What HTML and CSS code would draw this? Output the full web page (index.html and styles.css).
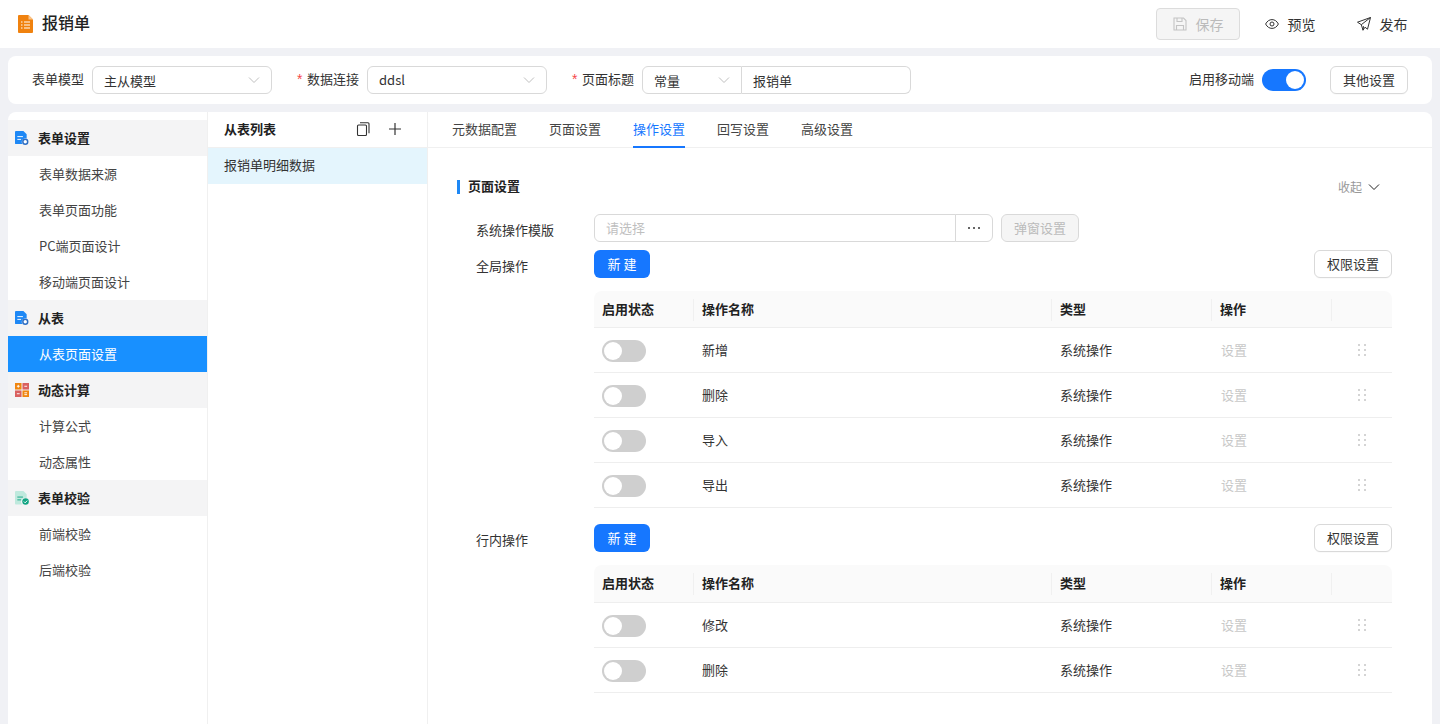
FILE: index.html
```html
<!DOCTYPE html>
<html lang="zh-CN">
<head>
<meta charset="utf-8">
<title>报销单</title>
<link rel="stylesheet" href="styles.css">
</head>
<body>
<svg class="defs" width="0" height="0" aria-hidden="true">
  <symbol id="ico-doc" viewBox="0 0 15 15">
    <path d="M1 0h8l3.5 3.5V8a4 4 0 0 0-4.6 6H1a1 1 0 0 1-1-1V1a1 1 0 0 1 1-1z" fill="#1e88f5"/>
    <path d="M2.5 6h6M2.5 9h4" stroke="#fff" stroke-width="1" fill="none"/>
    <circle cx="11" cy="11.5" r="2.6" fill="#fff" stroke="#2f6fc4" stroke-width="1.6"/>
  </symbol>
  <symbol id="ico-drag" viewBox="0 0 8 12">
    <path d="M0 0h2v2H0zM6 0h2v2H6zM0 5h2v2H0zM6 5h2v2H6zM0 10h2v2H0zM6 10h2v2H6z" fill="#d4d4d4"/>
  </symbol>
  <symbol id="ico-chev" viewBox="0 0 12 12">
    <path d="M1 3.5l5 5 5-5" fill="none" stroke="currentColor" stroke-width="1"/>
  </symbol>
</svg>

<header class="topbar">
  <div class="brand">
    <svg class="brand-icon" width="15" height="18" viewBox="0 0 15 18">
      <path d="M1 0h9.500L15 4.500V17a1 1 0 0 1-1 1H1a1 1 0 0 1-1-1V1a1 1 0 0 1 1-1z" fill="#f0820f"/>
      <path d="M10.500 0L15 4.500h-4.500z" fill="#f9c48a"/>
      <path d="M3 7h1.500M6 7h6M3 10h1.500M6 10h6M3 13h1.500M6 13h6" stroke="#fff" stroke-width="1.200"/>
    </svg>
    <span class="brand-name">报销单</span>
  </div>
  <div class="top-actions">
    <button class="btn-save">
      <svg width="14" height="14" viewBox="0 0 14 14" fill="none" stroke="#c4c4c4" stroke-width="1.100"><path d="M1 1h9.500L13 3.500V13H1z"/><path d="M4 1v3.500h5V1M3.500 13V8.500h7V13"/></svg>
      <span>保存</span>
    </button>
    <button class="btn-text">
      <svg width="14" height="10" viewBox="0 0 14 10" fill="none" stroke="#333" stroke-width="1"><path d="M.6 5C2.200 2 4.400.6 7 .6S11.800 2 13.400 5C11.800 8 9.600 9.400 7 9.400S2.200 8 .6 5z"/><circle cx="7" cy="5" r="2"/></svg>
      <span>预览</span>
    </button>
    <button class="btn-text">
      <svg width="14" height="14" viewBox="0 0 14 14" fill="none" stroke="#333" stroke-width="1"><path d="M13.500.5L.5 5.200l3.800 2.500 1.700 5.500 2-3 2.500 2zM13.500.5L4.300 7.700M6 13.200l.5-4"/></svg>
      <span>发布</span>
    </button>
  </div>
</header>

<section class="toolbar">
  <div class="field">
    <label class="field-label">表单模型</label>
    <div class="select w180"><span class="val">主从模型</span><svg class="chev"><use href="#ico-chev"/></svg></div>
  </div>
  <div class="field">
    <label class="field-label req">数据连接</label>
    <div class="select w180"><span>ddsl</span><svg class="chev"><use href="#ico-chev"/></svg></div>
  </div>
  <div class="field">
    <label class="field-label req">页面标题</label>
    <div class="combo">
      <div class="combo-select"><span class="val">常量</span><svg class="chev"><use href="#ico-chev"/></svg></div>
      <div class="combo-input"><span class="val">报销单</span></div>
    </div>
  </div>
  <div class="toolbar-right">
    <span class="field-label">启用移动端</span>
    <span class="switch on"><i></i></span>
    <button class="btn-outline">其他设置</button>
  </div>
</section>

<main class="workspace">
  <nav class="sidenav">
    <div class="nav-head"><svg class="nav-ico"><use href="#ico-doc"/></svg>表单设置</div>
    <a class="nav-item">表单数据来源</a>
    <a class="nav-item">表单页面功能</a>
    <a class="nav-item">PC端页面设计</a>
    <a class="nav-item">移动端页面设计</a>
    <div class="nav-head"><svg class="nav-ico"><use href="#ico-doc"/></svg>从表</div>
    <a class="nav-item active">从表页面设置</a>
    <div class="nav-head">
      <svg class="nav-ico" viewBox="0 0 15 15">
        <rect width="7" height="7" fill="#f0850f"/><rect x="8" width="7" height="7" fill="#d9605f"/><rect y="8" width="7" height="7" fill="#d9605f"/><rect x="8" y="8" width="7" height="7" fill="#f0850f"/>
        <path d="M2 3.500h3M3.500 2v3M10 3.500h3M2 11.500h3M10 10.500h3M10 12.500h3" stroke="#fff" stroke-width="1"/>
      </svg>动态计算</div>
    <a class="nav-item">计算公式</a>
    <a class="nav-item">动态属性</a>
    <div class="nav-head">
      <svg class="nav-ico" viewBox="0 0 15 15">
        <path d="M1 0h8l3.500 3.500V8a4 4 0 0 0-4.600 6.500H1a1 1 0 0 1-1-1V1a1 1 0 0 1 1-1z" fill="#bfe9dd"/>
        <path d="M2.500 6.500h6M2.500 9.500h4" stroke="#12a583" stroke-width="1" fill="none"/>
        <circle cx="11.300" cy="11.300" r="3.500" fill="#12a583"/>
        <path d="M9.500 11.300l1.400 1.400 2.200-2.400" stroke="#fff" stroke-width="1" fill="none"/>
      </svg>表单校验</div>
    <a class="nav-item">前端校验</a>
    <a class="nav-item">后端校验</a>
  </nav>

  <aside class="sublist">
    <div class="sublist-head">
      <span>从表列表</span>
      <span class="sublist-tools">
        <svg width="14" height="14" viewBox="0 0 14 14" fill="none" stroke="#333" stroke-width="1.100"><rect x="1.500" y="3" width="9" height="10.500" rx="1"/><path d="M4 .7h8a1 1 0 0 1 1 1v9.500"/></svg>
        <svg width="14" height="14" viewBox="0 0 14 14" fill="none" stroke="#333" stroke-width="1.200"><path d="M7 1v12M1 7h12"/></svg>
      </span>
    </div>
    <div class="sublist-row">报销单明细数据</div>
  </aside>

  <section class="panel">
    <div class="tabs">
      <span class="tab">元数据配置</span>
      <span class="tab">页面设置</span>
      <span class="tab active">操作设置</span>
      <span class="tab">回写设置</span>
      <span class="tab">高级设置</span>
    </div>
    <div class="panel-body">
      <div class="section-head">
        <h3 class="section-title">页面设置</h3>
        <span class="collapse">收起<svg class="chev-dark"><use href="#ico-chev"/></svg></span>
      </div>

      <div class="form-row first">
        <label class="form-label">系统操作模版</label>
        <div class="form-ctrl tpl">
          <div class="tpl-input">请选择</div>
          <button class="tpl-more"><svg width="12" height="2" viewBox="0 0 12 2" fill="#333"><circle cx="1" cy="1" r="1"/><circle cx="6" cy="1" r="1"/><circle cx="11" cy="1" r="1"/></svg></button>
          <button class="btn-disabled">弹窗设置</button>
        </div>
      </div>

      <div class="form-row">
        <label class="form-label">全局操作</label>
        <div class="form-ctrl">
          <div class="table-tools">
            <button class="btn-primary">新 建</button>
            <button class="btn-outline">权限设置</button>
          </div>
          <div class="grid-table">
            <div class="tr th"><span>启用状态</span><span>操作名称</span><span>类型</span><span>操作</span><span></span></div>
            <div class="tr"><span><em class="switch"><i></i></em></span><span>新增</span><span>系统操作</span><span class="muted">设置</span><span class="drag"><svg><use href="#ico-drag"/></svg></span></div>
            <div class="tr"><span><em class="switch"><i></i></em></span><span>删除</span><span>系统操作</span><span class="muted">设置</span><span class="drag"><svg><use href="#ico-drag"/></svg></span></div>
            <div class="tr"><span><em class="switch"><i></i></em></span><span>导入</span><span>系统操作</span><span class="muted">设置</span><span class="drag"><svg><use href="#ico-drag"/></svg></span></div>
            <div class="tr"><span><em class="switch"><i></i></em></span><span>导出</span><span>系统操作</span><span class="muted">设置</span><span class="drag"><svg><use href="#ico-drag"/></svg></span></div>
          </div>
        </div>
      </div>

      <div class="form-row second">
        <label class="form-label">行内操作</label>
        <div class="form-ctrl">
          <div class="table-tools">
            <button class="btn-primary">新 建</button>
            <button class="btn-outline">权限设置</button>
          </div>
          <div class="grid-table">
            <div class="tr th"><span>启用状态</span><span>操作名称</span><span>类型</span><span>操作</span><span></span></div>
            <div class="tr"><span><em class="switch"><i></i></em></span><span>修改</span><span>系统操作</span><span class="muted">设置</span><span class="drag"><svg><use href="#ico-drag"/></svg></span></div>
            <div class="tr"><span><em class="switch"><i></i></em></span><span>删除</span><span>系统操作</span><span class="muted">设置</span><span class="drag"><svg><use href="#ico-drag"/></svg></span></div>
          </div>
        </div>
      </div>
    </div>
  </section>
</main>
</body>
</html>
```
FILE: styles.css
```css
* { box-sizing: border-box; }
html, body { margin: 0; height: 100%; }
body {
  height: 724px;
  overflow: hidden;
  display: flex;
  flex-direction: column;
  background: #f0f1f5;
  color: #333;
  font-family: "Noto Sans CJK SC", "Noto Sans", sans-serif;
  font-size: 13px;
  line-height: 20px;
}
button { font: inherit; cursor: pointer; }
.defs { position: absolute; }

.topbar {
  flex: none;
  height: 48px;
  background: #fff;
  display: flex;
  align-items: center;
  justify-content: space-between;
  padding: 0 12px 0 18px;
}
.brand { display: flex; align-items: center; gap: 9px; }
.brand-name { font-size: 16px; font-weight: 500; color: #222; padding-bottom: 4px; }
.top-actions { display: flex; align-items: center; }
.btn-save {
  width: 84px;
  height: 32px;
  display: flex;
  align-items: center;
  justify-content: center;
  gap: 9px;
  padding: 0;
  border: 1px solid #dcdcdc;
  border-radius: 4px;
  background: #f5f5f5;
  color: #bbb;
  font-size: 14px;
  margin-right: 4px;
}
.btn-text {
  width: 92px;
  height: 32px;
  display: flex;
  align-items: center;
  justify-content: center;
  gap: 9px;
  padding: 0;
  border: 0;
  background: none;
  color: #333;
  font-size: 14px;
}

.toolbar {
  flex: none;
  height: 48px;
  margin: 8px 8px 0;
  padding: 0 24px;
  background: #fff;
  border-radius: 8px;
  display: flex;
  align-items: center;
}
.field { display: flex; align-items: center; margin-right: 25px; }
.field-label { color: #333; padding-bottom: 2px; }
.field-label.req { margin-right: 8px; }
.field-label.req::before {
  content: "*";
  display: inline-block;
  width: 10px;
  color: #f5484a;
  font-family: "Liberation Sans", sans-serif;
  font-size: 14px;
}
.field > .field-label:not(.req) { margin-right: 8px; }
.val { padding-top: 2px; }
.select {
  height: 28px;
  padding: 0 11px;
  display: flex;
  align-items: center;
  justify-content: space-between;
  border: 1px solid #d9d9d9;
  border-radius: 6px;
  background: #fff;
}
.w180 { width: 180px; }
.chev { width: 12px; height: 12px; color: #bfbfbf; }
.combo { display: flex; width: 269px; height: 28px; }
.combo-select {
  width: 100px;
  display: flex;
  align-items: center;
  justify-content: space-between;
  padding: 0 11px;
  border: 1px solid #d9d9d9;
  border-radius: 6px 0 0 6px;
}
.combo-input {
  flex: 1;
  display: flex;
  align-items: center;
  padding: 0 11px;
  border: 1px solid #d9d9d9;
  border-left: 0;
  border-radius: 0 6px 6px 0;
}
.toolbar-right { margin-left: auto; display: flex; align-items: center; }
.toolbar-right .btn-outline { margin-left: 24px; }
.toolbar-right .switch { margin-left: 8px; }

.switch {
  display: inline-block;
  position: relative;
  width: 44px;
  height: 22px;
  border-radius: 11px;
  background: #cfcfcf;
  vertical-align: middle;
}
.switch i {
  position: absolute;
  top: 2px;
  left: 2px;
  width: 18px;
  height: 18px;
  border-radius: 50%;
  background: #fff;
}
.switch.on { background: #1677ff; }
.switch.on i { left: 24px; }

.btn-outline {
  width: 78px;
  height: 28px;
  padding: 0;
  border: 1px solid #d9d9d9;
  border-radius: 6px;
  background: #fff;
  color: #333;
  box-shadow: 0 1px 0 rgba(0,0,0,.02);
}

.workspace {
  flex: 1;
  min-height: 0;
  margin: 8px 8px 0;
  display: flex;
  background: #fff;
  border-radius: 8px 8px 0 0;
  overflow: hidden;
}
.sidenav {
  flex: none;
  width: 200px;
  padding-top: 8px;
  border-right: 1px solid #f0f0f0;
}
.nav-head {
  height: 36px;
  display: flex;
  align-items: center;
  gap: 9px;
  padding-left: 7px;
  background: #f4f4f5;
  color: #222;
  font-weight: 700;
}
.nav-ico { width: 14px; height: 14px; flex: none; }
.nav-item {
  height: 36px;
  display: flex;
  align-items: center;
  padding: 0 0 0 31px;
  color: #444;
}
.nav-item.active { background: #1890ff; color: #fff; }

.sublist {
  flex: none;
  width: 220px;
  border-right: 1px solid #f0f0f0;
}
.sublist-head {
  height: 36px;
  display: flex;
  align-items: center;
  justify-content: space-between;
  padding: 0 25px 1px 16px;
  border-bottom: 1px solid #f0f0f0;
  font-weight: 700;
  color: #222;
}
.sublist-tools { display: flex; gap: 18px; }
.sublist-row {
  height: 36px;
  display: flex;
  align-items: center;
  padding: 0 0 3px 16px;
  background: #e4f5fd;
}

.panel { flex: 1; min-width: 0; }
.tabs {
  height: 36px;
  display: flex;
  gap: 32px;
  padding-left: 24px;
  border-bottom: 1px solid #f0f0f0;
}
.tab { height: 36px; line-height: 34px; color: #444; }
.tab.active { color: #1677ff; border-bottom: 2px solid #1677ff; }

.panel-body { padding: 30px 40px 0 29px; }
.section-head {
  display: flex;
  align-items: center;
  justify-content: space-between;
  height: 18px;
  padding-right: 12px;
}
.section-title {
  margin: 0;
  height: 14px;
  font-size: 13px;
  font-weight: 700;
  color: #222;
  border-left: 3px solid #1e88f5;
  padding-left: 8px;
  line-height: 12px;
}
.collapse { display: flex; align-items: center; gap: 6px; font-size: 12px; color: #999; }
.chev-dark { width: 12px; height: 12px; color: #222; }

.form-row { display: flex; }
.form-row.first { margin-top: 18px; margin-bottom: 8px; }
.form-row.second { margin-top: 16px; }
.form-label { flex: none; width: 137px; padding-left: 19px; height: 28px; line-height: 31px; color: #333; }
.form-ctrl { flex: 1; min-width: 0; }
.tpl { display: flex; height: 28px; }
.tpl-input {
  width: 362px;
  display: flex;
  align-items: center;
  padding: 0 0 1px 11px;
  border: 1px solid #d9d9d9;
  border-radius: 6px 0 0 6px;
  color: #bfbfbf;
}
.tpl-more {
  width: 38px;
  padding: 0;
  margin-left: -1px;
  border: 1px solid #d9d9d9;
  border-radius: 0 6px 6px 0;
  background: #fff;
  display: flex;
  align-items: center;
  justify-content: center;
}
.btn-disabled {
  width: 78px;
  margin-left: 8px;
  padding: 0;
  border: 1px solid #d9d9d9;
  border-radius: 6px;
  background: #f5f5f5;
  color: #bbb;
}
.table-tools { display: flex; justify-content: space-between; }
.btn-primary {
  width: 56px;
  height: 28px;
  padding: 0;
  border: 0;
  border-radius: 6px;
  background: #1677ff;
  color: #fff;
}

.grid-table { margin-top: 13px; }
.tr {
  display: grid;
  grid-template-columns: 100px 358px 160px 120px 60px;
  height: 45px;
  align-items: center;
  border-bottom: 1px solid #eee;
}
.tr > span { padding: 0 0 1px 8px; }
.tr > .muted { padding-left: 9px; }
.th {
  height: 37px;
  background: #fafafa;
  font-weight: 700;
  color: #222;
  border-radius: 8px 8px 0 0;
}
.second .th { height: 38px; }
.th > span { position: relative; min-height: 21px; }
.th > span:not(:first-child)::before {
  content: "";
  position: absolute;
  left: -1px;
  top: 0;
  height: 22px;
  width: 1px;
  background: #f0f0f0;
}
.tr em.switch { display: block; top: 1px; }
.muted { color: #c8c8c8; }
.tr > .drag { padding-left: 26px; display: flex; align-items: center; }
.drag svg { width: 8px; height: 12px; }
```
